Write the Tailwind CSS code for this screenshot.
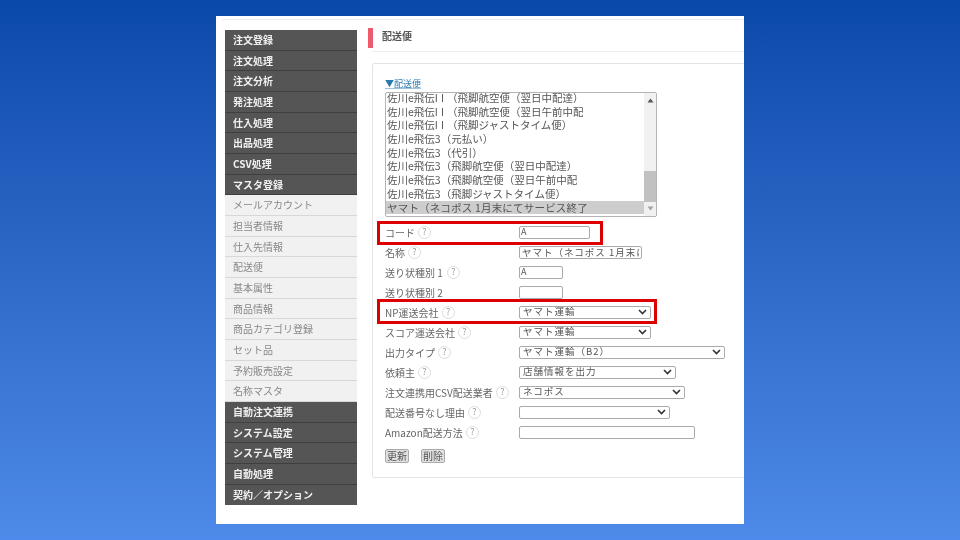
<!doctype html>
<html lang="ja">
<head>
<meta charset="UTF-8" />
<title>配送便</title>
<script src="https://cdn.jsdelivr.net/npm/@tailwindcss/browser@4"></script>
</head>
<body class="w-[960px] h-[540px] overflow-hidden bg-linear-to-b from-[#0a49a9] to-[#4e8ae9] font-['Noto_Sans_CJK_JP','Noto_Sans',sans-serif]">
<div class="relative ml-[216px] mt-[16px] w-[528px] h-[508px] bg-white overflow-hidden pt-[3px] blur-[0.35px]">
  <div class="flex border-t border-[#eeeeee] ml-[6px] pl-[3px] pt-[10px] h-full">
    <!-- side menu -->
    <nav class="w-[132px] shrink-0 text-[10px] leading-none">
      <div class="h-[20.68px] flex items-center px-2 font-bold text-[#f0f0f0] bg-[#555555] border-b border-[#3f3f3f]">注文登録</div>
      <div class="h-[20.68px] flex items-center px-2 font-bold text-[#f0f0f0] bg-[#555555] border-b border-[#3f3f3f]">注文処理</div>
      <div class="h-[20.68px] flex items-center px-2 font-bold text-[#f0f0f0] bg-[#555555] border-b border-[#3f3f3f]">注文分析</div>
      <div class="h-[20.68px] flex items-center px-2 font-bold text-[#f0f0f0] bg-[#555555] border-b border-[#3f3f3f]">発注処理</div>
      <div class="h-[20.68px] flex items-center px-2 font-bold text-[#f0f0f0] bg-[#555555] border-b border-[#3f3f3f]">仕入処理</div>
      <div class="h-[20.68px] flex items-center px-2 font-bold text-[#f0f0f0] bg-[#555555] border-b border-[#3f3f3f]">出品処理</div>
      <div class="h-[20.68px] flex items-center px-2 font-bold text-[#f0f0f0] bg-[#555555] border-b border-[#3f3f3f]">CSV処理</div>
      <div class="h-[20.68px] flex items-center px-2 font-bold text-[#f0f0f0] bg-[#555555] border-b border-[#3f3f3f]">マスタ登録</div>
      <div class="h-[20.68px] flex items-center px-2 text-[#888888] bg-[#f1f1f1] border-b border-[#d8d8d8]">メールアカウント</div>
      <div class="h-[20.68px] flex items-center px-2 text-[#888888] bg-[#f1f1f1] border-b border-[#d8d8d8]">担当者情報</div>
      <div class="h-[20.68px] flex items-center px-2 text-[#888888] bg-[#f1f1f1] border-b border-[#d8d8d8]">仕入先情報</div>
      <div class="h-[20.68px] flex items-center px-2 text-[#888888] bg-[#f1f1f1] border-b border-[#d8d8d8]">配送便</div>
      <div class="h-[20.68px] flex items-center px-2 text-[#888888] bg-[#f1f1f1] border-b border-[#d8d8d8]">基本属性</div>
      <div class="h-[20.68px] flex items-center px-2 text-[#888888] bg-[#f1f1f1] border-b border-[#d8d8d8]">商品情報</div>
      <div class="h-[20.68px] flex items-center px-2 text-[#888888] bg-[#f1f1f1] border-b border-[#d8d8d8]">商品カテゴリ登録</div>
      <div class="h-[20.68px] flex items-center px-2 text-[#888888] bg-[#f1f1f1] border-b border-[#d8d8d8]">セット品</div>
      <div class="h-[20.68px] flex items-center px-2 text-[#888888] bg-[#f1f1f1] border-b border-[#d8d8d8]">予約販売設定</div>
      <div class="h-[20.68px] flex items-center px-2 text-[#888888] bg-[#f1f1f1] border-b border-[#d8d8d8]">名称マスタ</div>
      <div class="h-[20.68px] flex items-center px-2 font-bold text-[#f0f0f0] bg-[#555555] border-b border-[#3f3f3f]">自動注文連携</div>
      <div class="h-[20.68px] flex items-center px-2 font-bold text-[#f0f0f0] bg-[#555555] border-b border-[#3f3f3f]">システム設定</div>
      <div class="h-[20.68px] flex items-center px-2 font-bold text-[#f0f0f0] bg-[#555555] border-b border-[#3f3f3f]">システム管理</div>
      <div class="h-[20.68px] flex items-center px-2 font-bold text-[#f0f0f0] bg-[#555555] border-b border-[#3f3f3f]">自動処理</div>
      <div class="h-[20.68px] flex items-center px-2 font-bold text-[#f0f0f0] bg-[#555555]">契約／オプション</div>
    </nav>

    <main class="ml-[11px] w-[400px] shrink-0 -mt-[2px]">
      <div class="flex items-center h-[20px] border-l-[5px] border-[#ec5a6c] pl-[9px] pb-[6px] text-[10px] font-bold text-[#555555]">配送便</div>
      <div class="ml-[4px] mt-[3px] border-t border-[#eeeeee]"></div>

      <section class="ml-[4px] mt-[11px] w-[390px] h-[415px] border border-[#e4e4e4] rounded-[2px] pl-[12px] pt-[13px] text-[10px] text-[#666666]">
        <a class="block h-[15px] leading-[14px] text-[9px] text-[#2a7ab0] underline decoration-[#9cc4dc]">▼配送便</a>

        <!-- list box -->
        <div class="w-[272px] h-[125px] border border-[#b4b4b4] rounded-[2px] flex overflow-hidden text-[10.5px] leading-[13.7px] text-[#555555]">
          <ul class="w-[259px] -mt-[2px]">
            <li class="h-[13.7px] pl-px whitespace-nowrap">佐川e飛伝<span class="tracking-[3px]">II</span>（飛脚航空便（翌日中配達）</li>
            <li class="h-[13.7px] pl-px whitespace-nowrap">佐川e飛伝<span class="tracking-[3px]">II</span>（飛脚航空便（翌日午前中配</li>
            <li class="h-[13.7px] pl-px whitespace-nowrap">佐川e飛伝<span class="tracking-[3px]">II</span>（飛脚ジャストタイム便）</li>
            <li class="h-[13.7px] pl-px whitespace-nowrap">佐川e飛伝3（元払い）</li>
            <li class="h-[13.7px] pl-px whitespace-nowrap">佐川e飛伝3（代引）</li>
            <li class="h-[13.7px] pl-px whitespace-nowrap">佐川e飛伝3（飛脚航空便（翌日中配達）</li>
            <li class="h-[13.7px] pl-px whitespace-nowrap">佐川e飛伝3（飛脚航空便（翌日午前中配</li>
            <li class="h-[13.7px] pl-px whitespace-nowrap">佐川e飛伝3（飛脚ジャストタイム便）</li>
            <li class="h-[13.7px] pl-px whitespace-nowrap bg-[#cdcdcd] tracking-[0.2px]">ヤマト（ネコポス 1月末にてサービス終了</li>
          </ul>
          <div class="relative w-[12px] bg-[#f1f1f1]">
            <svg class="absolute left-[3px] top-[5px]" width="7" height="5" viewBox="0 0 7 5"><path d="M3.5 0.5 L6.5 4.5 H0.5 Z" fill="#555555"/></svg>
            <div class="absolute left-0 right-0 top-[78px] h-[31px] bg-[#c1c1c1]"></div>
            <svg class="absolute left-[3px] bottom-[5px]" width="7" height="5" viewBox="0 0 7 5"><path d="M3.5 4.5 L6.5 0.5 H0.5 Z" fill="#a3a3a3"/></svg>
          </div>
        </div>

        <!-- form rows -->
        <div class="mt-[5px]">
          <div class="flex items-center h-[20px]"><span class="w-[134px] flex items-center gap-[3px] whitespace-nowrap">コード<i class="size-[13px] rounded-full border border-[#dddddd] flex items-center justify-center not-italic text-[9px] text-[#999999]">?</i></span><input class="w-[71px] h-[13px] border border-[#aaaaaa] rounded-[2px] bg-white px-px text-[9px] text-[#555555]" value="A" /></div>
          <div class="flex items-center h-[20px]"><span class="w-[134px] flex items-center gap-[3px] whitespace-nowrap">名称<i class="size-[13px] rounded-full border border-[#dddddd] flex items-center justify-center not-italic text-[9px] text-[#999999]">?</i></span><input class="w-[123px] h-[13px] border border-[#aaaaaa] rounded-[2px] bg-white px-[2px] text-[9.5px] tracking-[1px] text-[#555555]" value="ヤマト（ネコポス 1月末にてサービス終了" /></div>
          <div class="flex items-center h-[20px]"><span class="w-[134px] flex items-center gap-[4px] whitespace-nowrap">送り状種別 1<i class="size-[13px] rounded-full border border-[#dddddd] flex items-center justify-center not-italic text-[9px] text-[#999999]">?</i></span><input class="w-[44px] h-[13px] border border-[#aaaaaa] rounded-[2px] bg-white px-px text-[9px] text-[#555555]" value="A" /></div>
          <div class="flex items-center h-[20px]"><span class="w-[134px] whitespace-nowrap">送り状種別 2</span><input class="w-[44px] h-[13px] border border-[#aaaaaa] rounded-[2px] bg-white" /></div>
          <div class="flex items-center h-[20px]"><span class="w-[134px] flex items-center gap-[3px] whitespace-nowrap">NP運送会社<i class="size-[13px] rounded-full border border-[#dddddd] flex items-center justify-center not-italic text-[9px] text-[#999999]">?</i></span><div class="w-[132px] h-[13px] border border-[#aaaaaa] rounded-[2px] bg-white pl-[3px] pr-[3px] flex items-center justify-between text-[9.5px] leading-none tracking-[1px] text-[#555555]">ヤマト運輸<svg width="9" height="6" viewBox="0 0 9 6"><path d="M1 1 L4.5 4.5 L8 1" fill="none" stroke="#333333" stroke-width="1.6"/></svg></div></div>
          <div class="flex items-center h-[20px]"><span class="w-[134px] flex items-center gap-[3px] whitespace-nowrap">スコア運送会社<i class="size-[13px] rounded-full border border-[#dddddd] flex items-center justify-center not-italic text-[9px] text-[#999999]">?</i></span><div class="w-[132px] h-[13px] border border-[#aaaaaa] rounded-[2px] bg-white pl-[3px] pr-[3px] flex items-center justify-between text-[9.5px] leading-none tracking-[1px] text-[#555555]">ヤマト運輸<svg width="9" height="6" viewBox="0 0 9 6"><path d="M1 1 L4.5 4.5 L8 1" fill="none" stroke="#333333" stroke-width="1.6"/></svg></div></div>
          <div class="flex items-center h-[20px]"><span class="w-[134px] flex items-center gap-[3px] whitespace-nowrap">出力タイプ<i class="size-[13px] rounded-full border border-[#dddddd] flex items-center justify-center not-italic text-[9px] text-[#999999]">?</i></span><div class="w-[206px] h-[13px] border border-[#aaaaaa] rounded-[2px] bg-white pl-[3px] pr-[3px] flex items-center justify-between text-[9.5px] leading-none tracking-[1px] text-[#555555]">ヤマト運輸（B2）<svg width="9" height="6" viewBox="0 0 9 6"><path d="M1 1 L4.5 4.5 L8 1" fill="none" stroke="#333333" stroke-width="1.6"/></svg></div></div>
          <div class="flex items-center h-[20px]"><span class="w-[134px] flex items-center gap-[3px] whitespace-nowrap">依頼主<i class="size-[13px] rounded-full border border-[#dddddd] flex items-center justify-center not-italic text-[9px] text-[#999999]">?</i></span><div class="w-[157px] h-[13px] border border-[#aaaaaa] rounded-[2px] bg-white pl-[3px] pr-[3px] flex items-center justify-between text-[9.5px] leading-none tracking-[1px] text-[#555555]">店舗情報を出力<svg width="9" height="6" viewBox="0 0 9 6"><path d="M1 1 L4.5 4.5 L8 1" fill="none" stroke="#333333" stroke-width="1.6"/></svg></div></div>
          <div class="flex items-center h-[20px]"><span class="w-[134px] flex items-center gap-[3px] whitespace-nowrap">注文連携用CSV配送業者<i class="size-[13px] rounded-full border border-[#dddddd] flex items-center justify-center not-italic text-[9px] text-[#999999]">?</i></span><div class="w-[166px] h-[13px] border border-[#aaaaaa] rounded-[2px] bg-white pl-[3px] pr-[3px] flex items-center justify-between text-[9.5px] leading-none tracking-[1px] text-[#555555]">ネコポス<svg width="9" height="6" viewBox="0 0 9 6"><path d="M1 1 L4.5 4.5 L8 1" fill="none" stroke="#333333" stroke-width="1.6"/></svg></div></div>
          <div class="flex items-center h-[20px]"><span class="w-[134px] flex items-center gap-[3px] whitespace-nowrap">配送番号なし理由<i class="size-[13px] rounded-full border border-[#dddddd] flex items-center justify-center not-italic text-[9px] text-[#999999]">?</i></span><div class="w-[151px] h-[13px] border border-[#aaaaaa] rounded-[2px] bg-white pl-[3px] pr-[3px] flex items-center justify-end"><svg width="9" height="6" viewBox="0 0 9 6"><path d="M1 1 L4.5 4.5 L8 1" fill="none" stroke="#333333" stroke-width="1.6"/></svg></div></div>
          <div class="flex items-center h-[20px]"><span class="w-[134px] flex items-center gap-[3px] whitespace-nowrap">Amazon配送方法<i class="size-[13px] rounded-full border border-[#dddddd] flex items-center justify-center not-italic text-[9px] text-[#999999]">?</i></span><input class="w-[176px] h-[13px] border border-[#aaaaaa] rounded-[2px] bg-white" /></div>
        </div>

        <div class="flex gap-[12px] mt-[7px]">
          <button class="w-[24px] h-[14px] border border-[#aaaaaa] rounded-[2px] bg-[#e0e0e0] text-[10px] leading-none text-[#555555]">更新</button>
          <button class="w-[24px] h-[14px] border border-[#aaaaaa] rounded-[2px] bg-[#e0e0e0] text-[10px] leading-none text-[#555555]">削除</button>
        </div>
      </section>
    </main>
  </div>

  <!-- annotation boxes over the form -->
  <div class="absolute left-[161px] top-[205px] w-[226px] h-[24px] border-[3px] border-[#dd0000]"></div>
  <div class="absolute left-[161px] top-[283px] w-[280px] h-[25px] border-[3px] border-[#dd0000]"></div>
</div>
</body>
</html>
